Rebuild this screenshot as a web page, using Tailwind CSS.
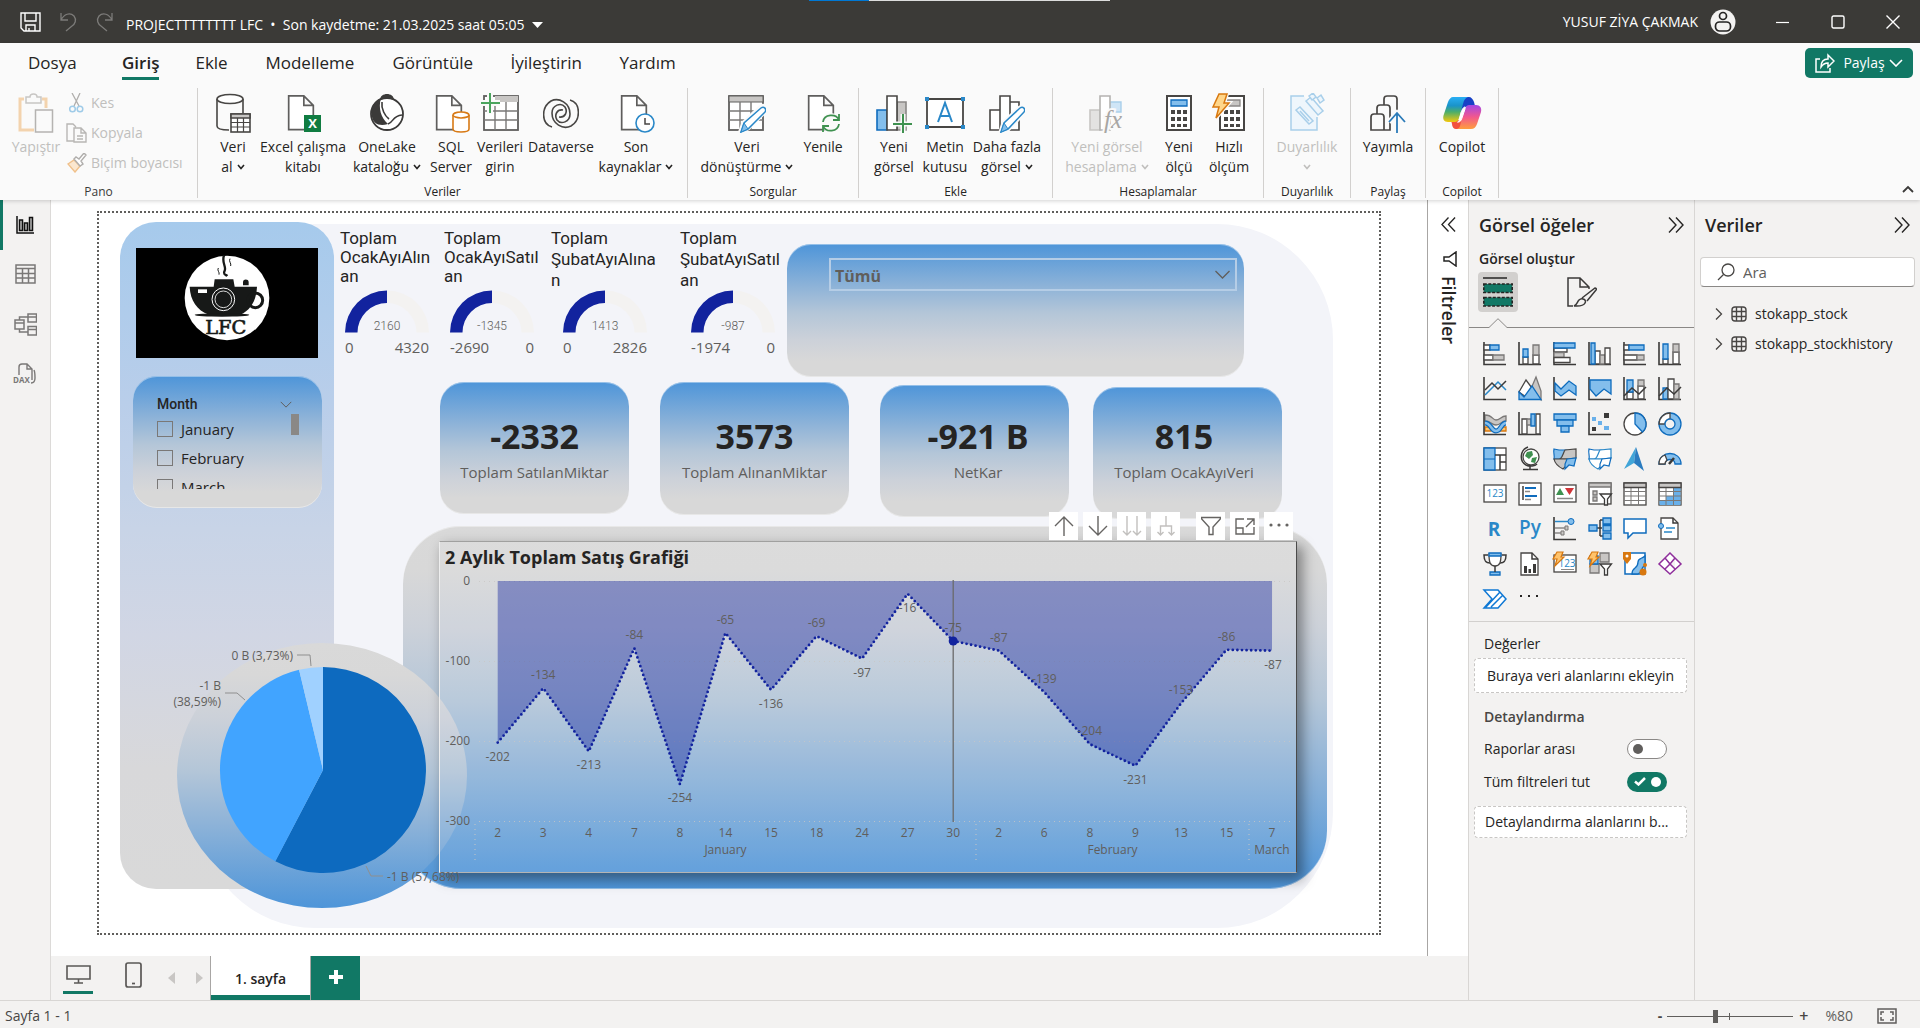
<!DOCTYPE html>
<html lang="tr">
<head>
<meta charset="utf-8">
<title>PROJECTTTTTTTT LFC</title>
<script src="https://cdn.jsdelivr.net/npm/@tailwindcss/browser@4"></script>
</head>
<body class="flex h-screen flex-col overflow-hidden bg-[#f3f2f1] font-['Open_Sans','Noto_Sans',sans-serif] text-[14px] leading-5 text-[#252423]">

<!-- Shared chevron -->
<svg class="hidden">
  <symbol id="chev" viewBox="0 0 8 6"><path d="M1 1l3 3.5L7 1" fill="none" stroke="currentColor" stroke-width="1.6"/></symbol>
  <symbol id="chev-lg" viewBox="0 0 16 9"><path d="M1 1l7 7 7-7" fill="none" stroke="currentColor" stroke-width="1.3"/></symbol>
  <symbol id="dbl-right" viewBox="0 0 16 16"><path d="M1 .5l7 7.5-7 7.500M8 .5L15 8l-7 7.500" fill="none" stroke="currentColor" stroke-width="1.4"/></symbol>
  <symbol id="page" viewBox="0 0 28 38"><path d="M1 1h16l10 10v25.500H1zM17 1v10h10" fill="#fff" stroke="#5f5e5d" stroke-width="1.8"/></symbol>
</svg>

<!-- Title bar -->
<header class="relative flex h-[43px] shrink-0 items-center bg-[#3b3a37] text-white">
  <div class="absolute top-0 left-[809px] flex h-px w-[301px]"><span class="w-[60px] bg-[#0078d4]"></span><span class="flex-1 bg-[#dcdcdc]"></span></div>
  <button class="ml-[20px]" aria-label="Kaydet"><svg class="h-5 w-[21px]" viewBox="0 0 21 20" fill="none" stroke="#fff" stroke-width="1.4"><path d="M1 1h19v18H4l-3-3zM5 1v8h11V1M6 19v-6h9v6M9 19v-3"/></svg></button>
  <button class="ml-[18px]" aria-label="Geri al"><svg class="h-5 w-[18px]" viewBox="0 0 18 20" fill="none" stroke="#7c7b79" stroke-width="1.3"><path d="M2 1v7h7M2 8C5 2 11 0 15 4c3 4 1 8-2 10l-6 5"/></svg></button>
  <button class="ml-[19px]" aria-label="Yinele"><svg class="h-5 w-[18px]" viewBox="0 0 18 20" fill="none" stroke="#7c7b79" stroke-width="1.3"><path d="M16 1v7H9M16 8C13 2 7 0 3 4c-3 4-1 8 2 10l6 5"/></svg></button>
  <button class="ml-[12px] flex items-center gap-2 pt-[6px] text-[14px]"><span>PROJECTTTTTTTT LFC&nbsp; •&nbsp; Son kaydetme: 21.03.2025 saat 05:05</span><svg class="h-[6px] w-[11px]" viewBox="0 0 11 6"><path d="M0 0h11L5.500 6z" fill="#fff"/></svg></button>
  <div class="ml-auto flex items-center">
    <span class="text-[14px]">YUSUF ZİYA ÇAKMAK</span>
    <svg class="ml-3 size-[26px]" viewBox="0 0 26 26"><circle cx="13" cy="13" r="12.500" fill="#f3f2f1"/><g fill="none" stroke="#252423" stroke-width="1.700"><circle cx="13" cy="7" r="3.500"/><rect x="5.500" y="13" width="15" height="9" rx="4"/></g></svg>
    <button class="ml-[40px]" aria-label="Simge durumuna küçült"><svg class="size-[14px]" viewBox="0 0 14 14"><path d="M0 7.500h13" stroke="#fff" stroke-width="1.200"/></svg></button>
    <button class="ml-[41px]" aria-label="Ekranı kapla"><svg class="size-[14px]" viewBox="0 0 14 14"><rect x="1" y="1" width="12" height="12" rx="1.500" fill="none" stroke="#fff" stroke-width="1.400"/></svg></button>
    <button class="mr-[20px] ml-[41px]" aria-label="Kapat"><svg class="size-[14px]" viewBox="0 0 14 14"><path d="M.5.5l13 13M13.500.5l-13 13" stroke="#fff" stroke-width="1.400"/></svg></button>
  </div>
</header>

<!-- Ribbon -->
<section class="z-10 h-[157px] shrink-0 bg-[#fafafa] shadow-[0_1px_4px_#0000002e]">
  <nav class="flex h-[42px] items-start pt-[9px] pl-[28px] text-[17px] leading-[22px]">
    <a href="#" class="w-[94px]">Dosya</a>
    <a href="#" class="mr-[36px] border-b-[3px] border-[#117865] pb-[3px] font-semibold">Giriş</a>
    <a href="#" class="w-[70px]">Ekle</a>
    <a href="#" class="w-[127px]">Modelleme</a>
    <a href="#" class="w-[118px]">Görüntüle</a>
    <a href="#" class="w-[109px]">İyileştirin</a>
    <a href="#">Yardım</a>
    <button class="-mt-1 mr-[7px] ml-auto flex h-[30px] w-[108px] items-center justify-center gap-2 rounded-[5px] bg-[#117865] text-[14px] text-white">
      <svg class="size-5" viewBox="0 0 20 20" fill="none" stroke="#fff" stroke-width="1.500"><path d="M5 6H1v13h14v-4M6 14c0-5 2-8 7-8V2l6 6-6 6v-4c-3 0-5 1-7 4z"/></svg>
      <span class="flex items-center gap-1">Paylaş <svg class="h-2 w-[14px]" viewBox="0 0 14 8"><path d="M1 1l6 6 6-6" fill="none" stroke="#fff" stroke-width="1.600"/></svg></span>
    </button>
  </nav>
  <div class="flex h-[115px] pt-[3px] text-[14px] whitespace-nowrap">
    <div class="flex h-[110px] w-[198px] flex-col justify-between border-r border-[#d2d0ce] text-[#c0bfbd]">
      <div class="flex pt-[5px]">
        <button class="ml-[8px] flex w-[56px] flex-col items-center"><svg class="mb-1 h-10 w-9" viewBox="0 0 36 40" fill="none"><path d="M6 6H2v31h14M24 6h4v9" stroke="#f3d3ae" stroke-width="3"/><path d="M8 4h4c0-4 7-4 7 0h4v6H8z" fill="#fafafa" stroke="#c8c6c4" stroke-width="1.500"/><path d="M17.500 17h17v22h-17z" fill="#fafafa" stroke="#b5b3b1" stroke-width="1.500"/></svg><span>Yapıştır</span></button>
        <div class="flex flex-col">
          <button class="mb-[10px] flex h-[20px] items-center gap-1"><svg class="ml-[2px] h-5 w-[21px]" viewBox="0 0 21 20" fill="none"><path d="M6 0l7 13M14 0L8 13" stroke="#b0aeac" stroke-width="1.300"/><circle cx="6.500" cy="16" r="2.800" stroke="#9fcbe8" stroke-width="1.500"/><circle cx="14" cy="16" r="2.800" stroke="#9fcbe8" stroke-width="1.500"/></svg>Kes</button>
          <button class="mb-[10px] flex h-[20px] items-center gap-1"><svg class="ml-[2px] h-5 w-[21px]" viewBox="0 0 21 20" fill="none" stroke="#b8b6b4" stroke-width="1.400"><path d="M8 18H1V1h6l3 3M8 5h7l5 5v9H8zM15 5v5h5M11 13h6M11 16h6"/></svg>Kopyala</button>
          <button class="flex h-[20px] items-center gap-1"><svg class="ml-[2px] h-5 w-[21px]" viewBox="0 0 21 20" fill="none" stroke-width="1.400"><path d="M2 11l6-4 6 6-5 6z" fill="#fbe7cf" stroke="#f0c08a"/><path d="M8 6l2-2 3 2 5-6 2 2-5 6 2 3-3 2z" fill="#fff" stroke="#b0aeac"/></svg>Biçim boyacısı</button>
        </div>
      </div>
      <div class="text-center text-[12px] leading-[12px] text-[#3b3a39]">Pano</div>
    </div>

    <div class="flex h-[110px] w-[490px] flex-col justify-between border-r border-[#d2d0ce]">
      <div class="flex pt-[5px] pl-[9px]">
        <button class="flex w-[52px] flex-col items-center"><svg class="mb-1 h-10 w-9" viewBox="0 0 36 40" fill="none" stroke="#484644" stroke-width="1.600"><path d="M2 6v27c0 3 6 4 12 4M28 6v14"/><ellipse cx="15" cy="6" rx="13" ry="4.500" fill="#fff"/><rect x="16" y="21" width="19" height="18" fill="#fff"/><path d="M16 21h19v4H16z" fill="#c8c6c4"/><path d="M16 29.500h19M16 34h19M22.500 25v14M28.500 25v14" stroke-width="1.200"/></svg>Veri<span class="flex items-center gap-1">al<svg class="h-[6px] w-2"><use href="#chev"/></svg></span></button>
        <button class="flex w-[88px] flex-col items-center"><span class="relative mb-1 h-10 w-9"><svg class="absolute top-[2px] left-[2px] h-[36px] w-[28px]"><use href="#page"/></svg><span class="absolute top-[22px] left-[19px] h-[17px] w-[17px] bg-[#107c41] text-center text-[13px] leading-[17px] font-bold text-white">X</span></span>Excel çalışma<span>kitabı</span></button>
        <button class="flex w-[80px] flex-col items-center"><svg class="mb-1 h-10 w-9" viewBox="0 0 36 40"><circle cx="18" cy="21" r="16" fill="#fff" stroke="#3b3a39" stroke-width="1.800"/><path d="M12 5c-3 10 0 20 7 26-9 3-15-1-16-7C1 14 6 7 12 5z" fill="#3b3a39"/><path d="M11 7c0-8 14-8 14 0-5-2-9-2-14 0z" fill="#3b3a39"/><path d="M19 31c6-2 4-8 14-9M13 9c-1 7 3 14 7 17" fill="none" stroke="#3b3a39" stroke-width="1.600"/></svg>OneLake<span class="flex items-center gap-1">kataloğu<svg class="h-[6px] w-2"><use href="#chev"/></svg></span></button>
        <button class="flex w-[48px] flex-col items-center"><span class="relative mb-1 h-10 w-9"><svg class="absolute top-[2px] left-[2px] h-[36px] w-[28px]"><use href="#page"/></svg><svg class="absolute top-[18px] left-[19px] h-[22px] w-[18px]" viewBox="0 0 18 22"><path d="M1 4v14c0 4 16 4 16 0V4" fill="#fff" stroke="#d87a16" stroke-width="1.600"/><ellipse cx="9" cy="4" rx="8" ry="3" fill="#fff" stroke="#d87a16" stroke-width="1.600"/></svg></span>SQL<span>Server</span></button>
        <button class="flex w-[50px] flex-col items-center"><svg class="mb-1 h-10 w-[38px]" viewBox="0 0 38 40" fill="none"><rect x="3" y="3" width="34" height="34" fill="#fff" stroke="#5f5e5d" stroke-width="1.800"/><path d="M14 3h23v6H14z" fill="#c8c6c4"/><path d="M3 18h34M3 27h34M14 9v28M25 9v28" stroke="#7a7877" stroke-width="1.400"/><path d="M9-1v22M-1 10h20" stroke="#fafafa" stroke-width="6"/><path d="M9 0v20M0 10h19" stroke="#4ba55e" stroke-width="2"/></svg>Verileri<span>girin</span></button>
        <button class="flex w-[72px] flex-col items-center"><svg class="mb-1 h-10 w-9" viewBox="0 0 36 40" fill="none" stroke="#484644" stroke-width="1.600"><path d="M9 34C-2 31-2 14 8 8c8-4 19 2 19 13 0 8-9 11-13 6-3-5 0-11 6-10M27 7c11 3 11 20 1 26-8 4-19-2-19-13 0-8 9-11 13-6 3 5 0 11-6 10"/></svg>Dataverse</button>
        <button class="flex w-[78px] flex-col items-center"><span class="relative mb-1 h-10 w-9"><svg class="absolute top-[2px] left-[2px] h-[36px] w-[28px]"><use href="#page"/></svg><svg class="absolute top-[20px] left-[17px] size-5" viewBox="0 0 20 20"><circle cx="10" cy="10" r="9" fill="#fff" stroke="#2a88c8" stroke-width="1.600"/><path d="M10 5v6h5" fill="none" stroke="#484644" stroke-width="1.500"/></svg></span>Son<span class="flex items-center gap-1">kaynaklar<svg class="h-[6px] w-2"><use href="#chev"/></svg></span></button>
      </div>
      <div class="text-center text-[12px] leading-[12px]">Veriler</div>
    </div>

    <div class="flex h-[110px] w-[171px] flex-col justify-between border-r border-[#d2d0ce]">
      <div class="flex pt-[5px] pl-[9px]">
        <button class="flex w-[100px] flex-col items-center"><svg class="mb-1 h-10 w-[38px]" viewBox="0 0 38 40" fill="none"><rect x="1" y="3" width="34" height="34" fill="#fff" stroke="#5f5e5d" stroke-width="1.800"/><path d="M1 3h34v6H1z" fill="#c8c6c4" stroke="#5f5e5d"/><path d="M1 18h34M1 27h34M12 9v28M23 9v28" stroke="#7a7877" stroke-width="1.400"/><path d="M13 38l3-8 17-16c3-2 6 1 4 4L20 35z" fill="#fff" stroke="#fafafa" stroke-width="5"/><path d="M13 39l3-9 17-15c3-2 6 1 4 4L20 36z" fill="#fff" stroke="#2a88c8" stroke-width="1.500"/><path d="M13 39l3-9 4 6z" fill="#83beec" stroke="#2a88c8"/></svg>Veri<span class="flex items-center gap-1">dönüştürme<svg class="h-[6px] w-2"><use href="#chev"/></svg></span></button>
        <button class="flex w-[52px] flex-col items-center"><span class="relative mb-1 h-10 w-9"><svg class="absolute top-[2px] left-[2px] h-[36px] w-[28px]"><use href="#page"/></svg><svg class="absolute top-[20px] left-[16px] size-5" viewBox="0 0 20 20"><circle cx="10" cy="10" r="10" fill="#fafafa"/><path d="M2 9c1-8 13-9 16-2M18 1v6h-6M18 11c-1 8-13 9-16 2M2 19v-6h6" fill="none" stroke="#3f9150" stroke-width="1.800"/></svg></span>Yenile</button>
      </div>
      <div class="text-center text-[12px] leading-[12px]">Sorgular</div>
    </div>

    <div class="flex h-[110px] w-[194px] flex-col justify-between border-r border-[#d2d0ce]">
      <div class="flex pt-[5px] pl-[12px]">
        <button class="flex w-[46px] flex-col items-center"><svg class="mb-1 h-10 w-9" viewBox="0 0 36 40"><path d="M21 9h9v28h-9z" fill="#c8c6c4" stroke="#8a8886" stroke-width="1.600"/><path d="M1 17h10v20H1z" fill="#83beec" stroke="#0f6cbd" stroke-width="1.600"/><path d="M11 3h10v34H11z" fill="#fff" stroke="#484644" stroke-width="1.600"/><path d="M27 21v19M17 31h19" stroke="#fafafa" stroke-width="5"/><path d="M27 21v19M17 31h19" stroke="#3f9150" stroke-width="2"/></svg>Yeni<span>görsel</span></button>
        <button class="flex w-[56px] flex-col items-center"><svg class="mb-1 h-10 w-[40px]" viewBox="0 0 40 40"><path d="M2 6h36v28H2z" fill="#fff" stroke="#484644" stroke-width="1.800"/><path d="M0 4h4v4H0zM36 4h4v4h-4zM0 32h4v4H0zM36 32h4v4h-4z" fill="#2a88c8"/><path d="M13 29l7-19 7 19M15 23h10" fill="none" stroke="#2a88c8" stroke-width="2"/></svg>Metin<span>kutusu</span></button>
        <button class="flex w-[68px] flex-col items-center"><svg class="mb-1 h-10 w-9" viewBox="0 0 36 40"><path d="M1 17h10v20H1zM21 9h9v28h-9zM11 3h10v34H11z" fill="#fff" stroke="#484644" stroke-width="1.600"/><path d="M12 39l3-9 16-15c3-2 6 1 4 4L19 36z" fill="#fff" stroke="#fafafa" stroke-width="5"/><path d="M12 39l3-9 16-15c3-2 6 1 4 4L19 36z" fill="#fff" stroke="#2a88c8" stroke-width="1.500"/><path d="M12 39l3-9 4 6z" fill="#83beec" stroke="#2a88c8"/></svg>Daha fazla<span class="flex items-center gap-1">görsel<svg class="h-[6px] w-2"><use href="#chev"/></svg></span></button>
      </div>
      <div class="text-center text-[12px] leading-[12px]">Ekle</div>
    </div>

    <div class="flex h-[110px] w-[211px] flex-col justify-between border-r border-[#d2d0ce]">
      <div class="flex pt-[5px] pl-[8px]">
        <button class="flex w-[92px] flex-col items-center text-[#c0bfbd]"><svg class="mb-1 h-10 w-9" viewBox="0 0 36 40"><path d="M21 9h11v10H21z" fill="#cfe5f6" stroke="#a9cfea" stroke-width="1.400"/><path d="M1 17h10v20H1z" fill="#e3e2e1" stroke="#c8c6c4" stroke-width="1.600"/><path d="M11 3h10v34H11z" fill="#fff" stroke="#b5b3b1" stroke-width="1.600"/><text x="15" y="35" font-family="Liberation Serif" font-style="italic" font-size="25" fill="#a8a6a4" stroke="#fafafa" stroke-width="4" paint-order="stroke">fx</text></svg>Yeni görsel<span class="flex items-center gap-1">hesaplama<svg class="h-[6px] w-2"><use href="#chev"/></svg></span></button>
        <button class="flex w-[52px] flex-col items-center"><svg class="mb-1 h-10 w-9" viewBox="0 0 36 40"><rect x="6" y="3" width="24" height="34" fill="#fff" stroke="#484644" stroke-width="2"/><path d="M10 7h16v6H10z" fill="#83beec" stroke="#0f6cbd" stroke-width="1.300"/><path d="M10 17h4v4h-4zM16 17h4v4h-4zM22 17h4v4h-4zM10 24h4v4h-4zM16 24h4v4h-4zM22 24h4v4h-4zM10 31h4v3h-4zM16 31h4v3h-4zM22 31h4v3h-4z" fill="#484644"/></svg>Yeni<span>ölçü</span></button>
        <button class="flex w-[48px] flex-col items-center"><svg class="mb-1 h-10 w-9" viewBox="0 0 36 40"><rect x="9" y="3" width="24" height="34" fill="#fff" stroke="#484644" stroke-width="2"/><path d="M13 7h16v6H13z" fill="#c8c6c4" stroke="#8a8886" stroke-width="1.300"/><path d="M13 17h4v4h-4zM19 17h4v4h-4zM25 17h4v4h-4zM13 24h4v4h-4zM19 24h4v4h-4zM25 24h4v4h-4zM13 31h4v3h-4zM19 31h4v3h-4zM25 31h4v3h-4z" fill="#484644"/><path d="M8 1h8l-3 9h5L5 25l3-11H2z" fill="#ffd68a" stroke="#fafafa" stroke-width="4"/><path d="M8 1h8l-3 9h5L5 25l3-11H2z" fill="#ffd68a" stroke="#d8780f" stroke-width="1.500"/></svg>Hızlı<span>ölçüm</span></button>
      </div>
      <div class="text-center text-[12px] leading-[12px]">Hesaplamalar</div>
    </div>

    <div class="flex h-[110px] w-[87px] flex-col justify-between border-r border-[#d2d0ce]">
      <button class="flex flex-col items-center pt-[5px] text-[#c0bfbd]"><svg class="mb-1 h-10 w-9" viewBox="0 0 36 40" fill="#eef6fc" stroke="#a9cfea" stroke-width="1.500"><path d="M15 3H2v34h26V24"/><path d="M7 17l4-3 13 14-4 3z"/><path d="M11 18l9 10"/><path d="M17 8l5-4 12 14-5 4z"/><path d="M20 3l4-3 3 4-4 3zM28 5l4-3 3 5-4 3z"/></svg>Duyarlılık<span class="flex h-5 items-center"><svg class="h-[6px] w-2"><use href="#chev"/></svg></span></button>
      <div class="text-center text-[12px] leading-[12px]">Duyarlılık</div>
    </div>
    <div class="flex h-[110px] w-[75px] flex-col justify-between border-r border-[#d2d0ce]">
      <button class="flex flex-col items-center pt-[5px]"><svg class="mb-1 h-10 w-9" viewBox="0 0 36 40" fill="none" stroke="#484644" stroke-width="1.700"><path d="M1 37V24c0-3 2-3 3-3h7c3 0 3 2 3 3v13zM7 21v-6c0-3 2-3 3-3h7c3 0 3 2 3 3v22H14M14 12V6c0-3 2-3 3-3h7c3 0 3 2 3 3v13"/><path d="M27 39V21M19 29l8-9 8 9" stroke="#fafafa" stroke-width="5"/><path d="M27 40V20M19 29l8-9 8 9" stroke="#2a7ab8" stroke-width="1.800"/></svg>Yayımla</button>
      <div class="text-center text-[12px] leading-[12px]">Paylaş</div>
    </div>
    <div class="flex h-[110px] w-[73px] flex-col justify-between border-r border-[#d2d0ce]">
      <button class="flex flex-col items-center pt-[5px]">
        <svg class="mb-1 h-10 w-[40px]" viewBox="0 0 40 40">
          <defs>
            <linearGradient id="cpa" x1="0" y1="0" x2="0" y2="1"><stop offset="0" stop-color="#28aef5"/><stop offset=".35" stop-color="#1a93c9"/><stop offset=".6" stop-color="#4cae6a"/><stop offset="1" stop-color="#f5c80c"/></linearGradient>
            <linearGradient id="cpb" x1="0" y1="0" x2="0" y2="1"><stop offset="0" stop-color="#a347e6"/><stop offset=".5" stop-color="#f2588d"/><stop offset="1" stop-color="#ff9e3d"/></linearGradient>
          </defs>
          <path d="M22 4h5c2 0 4 2 5 5l1 4h-8l-4 8-6-6z" fill="#1741c6"/>
          <path d="M17 36h-3c-2 0-4-2-4-5l-1-4h9l4-7 5 6z" fill="#f2513d"/>
          <path d="M11 4h15c-3 1-4 3-5 7l-4 14c-1 4-3 4-6 4H6c-4 0-6-3-4-8L6 9c1-3 3-5 5-5z" fill="url(#cpa)"/>
          <path d="M29 36H15c3-1 3-3 4-7l4-13c1-4 3-4 6-4h5c4 0 6 3 5 7l-4 12c-1 3-3 5-6 5z" fill="url(#cpb)"/>
          <path d="M23 14c-1 0-2 1-3 3l-3 11c-1 2-2 1-1 1 2 0 3-1 4-4l3-9c0-1 1-2 0-2z" fill="#fff" stroke="#fff"/>
        </svg>Copilot</button>
      <div class="text-center text-[12px] leading-[12px]">Copilot</div>
    </div>
    <button class="mt-auto mr-[6px] mb-[7px] ml-auto" aria-label="Şeridi daralt"><svg class="h-2 w-3" viewBox="0 0 12 8"><path d="M1 7l5-5 5 5" fill="none" stroke="#3b3a39" stroke-width="1.800"/></svg></button>
  </div>
</section>

<main class="flex min-h-0 flex-1">
  <!-- View switcher -->
  <nav class="flex w-[51px] shrink-0 flex-col border-r border-[#dcdad8]">
    <a href="#" class="flex h-[50px] items-center justify-center border-l-[3px] border-[#117865] pr-[3px]" aria-label="Rapor"><svg class="size-[18px]" viewBox="0 0 18 18" fill="none" stroke="#111" stroke-width="1.500"><path d="M1 0v17h17"/><path d="M3.500 4h3v10.500h-3zM8.500 7h3v7.500h-3zM13.500 1.500h3v13h-3z" fill="#bbb"/></svg></a>
    <a href="#" class="flex h-[49px] items-center justify-center pb-[2px]" aria-label="Tablo"><svg class="h-5 w-[21px]" viewBox="0 0 21 20" fill="none" stroke="#7a7877" stroke-width="1.500"><path d="M1 1h19v18H1zM1 4.500h19M1 9.500h19M1 14h19M7.500 4.500V19M13.500 4.500V19"/></svg></a>
    <a href="#" class="flex h-[50px] items-center justify-center" aria-label="Model"><svg class="h-[23px] w-[23px]" viewBox="0 0 23 23" fill="none" stroke="#7a7877" stroke-width="1.500"><path d="M14 1h8.500v8H14zM14 13.500h8.500v8.500H14zM1 7h9v9H1zM1 10h9M14 4h8.500M14 16.500h8.500M5.500 7V4H14M5.500 16v3H14"/></svg></a>
    <a href="#" class="flex h-[50px] items-center justify-center" aria-label="DAX"><svg class="h-[22px] w-[24px] overflow-visible" viewBox="0 0 24 22" fill="none" stroke="#7a7877" stroke-width="1.400"><path d="M6 12V4c0-2 1-3 3-3h5l5 5v11M14 1v5h5M21 7c1 2 1 5 1 8 0 4-2 5-4 5"/><text x="0" y="20" font-size="8" font-weight="700" fill="#7a7877" stroke="none">DAX</text></svg></a>
  </nav>

  <div class="flex min-w-0 flex-1 flex-col">
    <div class="flex min-h-0 flex-1">
      <!-- Report canvas -->
      <div class="min-w-0 flex-1 overflow-hidden bg-white pt-[11px]">
        <div class="relative mx-auto h-[724px] w-[1284px]">
          <div class="absolute inset-0 border-2 border-dotted border-[#605e5c]"></div>
          <div class="absolute top-[13px] left-[102px] h-[704px] w-[1134px] rounded-[116px] bg-[#f3f4f9]"></div>
          <div class="absolute top-[11px] left-[23px] h-[667px] w-[214px] rounded-[36px] bg-[linear-gradient(#a6caec_0%,#b9ceea_27%,#c8d4e7_46%,#d1d6e4_62%,#d8d8da_82%,#d9d9d9_100%)]"></div>

          <!-- Logo -->
          <div class="absolute top-[37px] left-[39px] flex h-[110px] w-[182px] items-start justify-center bg-black pt-[7px]">
            <svg class="size-[86px]" viewBox="551 167 258 258">
              <circle cx="680" cy="296" r="127" fill="#fff"/>
              <path d="M568 262h72l3-22h56l4 22h67c-2 40-18 70-50 84H625c-35-14-55-42-57-84z" fill="#171918"/>
              <path d="M728 258v-10c0-10 17-10 17 0v10z" fill="#171918"/>
              <circle cx="765" cy="303" r="22" fill="none" stroke="#171918" stroke-width="9"/>
              <ellipse cx="665" cy="347" rx="82" ry="5" fill="#171918"/>
              <rect x="593" y="270" width="27" height="11" fill="#fff"/>
              <circle cx="669" cy="300" r="34" fill="#171918" stroke="#fff" stroke-width="3"/>
              <circle cx="669" cy="300" r="25" fill="none" stroke="#fff" stroke-width="2.500"/>
              <path d="M671 168c-8 22 8 34 2 46s4 12 8 16" fill="none" stroke="#171918" stroke-width="7"/>
              <path d="M654 206c-5 8 5 12 2 20M689 178c-5 8 5 14 2 22" fill="none" stroke="#171918" stroke-width="3"/>
              <text x="676" y="405" text-anchor="middle" font-family="DejaVu Serif" font-size="58" fill="#171918" stroke="#171918" stroke-width="2">LFC</text>
            </svg>
          </div>

          <!-- Month slicer -->
          <div class="absolute top-[165px] left-[36px] h-[132px] w-[189px] rounded-[24px] bg-[linear-gradient(#4e95d9_0%,#90b4d8_33%,#b4c6d8_52%,#ccd1d9_72%,#d8d8d8_88%)] shadow-[inset_0_1px_0_#ffffff66,inset_0_-1px_0_#ffffff66]">
            <div class="flex items-center justify-between pt-[18px] pr-[30px] pl-[24px] font-[Roboto,sans-serif] text-[14px] font-medium"><span>Month</span><svg class="h-[7px] w-[12px] text-[#605e5c]"><use href="#chev-lg"/></svg></div>
            <div class="ml-[24px] h-[75px] overflow-hidden text-[15px]">
              <label class="flex h-[29px] items-center gap-2"><input type="checkbox" class="size-4 appearance-none border border-[#7a7877]">January</label>
              <label class="flex h-[29px] items-center gap-2"><input type="checkbox" class="size-4 appearance-none border border-[#7a7877]">February</label>
              <label class="flex h-[29px] items-center gap-2"><input type="checkbox" class="size-4 appearance-none border border-[#7a7877]">March</label>
            </div>
            <div class="absolute top-[38px] right-[23px] h-[21px] w-[8px] bg-[#8a8886]"></div>
          </div>

          <!-- Gauges -->
          <figure class="absolute top-[18px] left-[243px] w-[92px] font-[Roboto,sans-serif] text-[17px] leading-[19px]">
            <figcaption class="whitespace-nowrap">Toplam<br>OcakAyıAlın<br>an</figcaption>
          </figure>
          <figure class="absolute top-[18px] left-[347px] w-[92px] font-[Roboto,sans-serif] text-[17px] leading-[19px]">
            <figcaption class="whitespace-nowrap">Toplam<br>OcakAyıSatıl<br>an</figcaption>
          </figure>
          <figure class="absolute top-[17px] left-[454px] w-[105px] font-[Roboto,sans-serif] text-[17px] leading-[21px]">
            <figcaption class="whitespace-nowrap">Toplam<br>ŞubatAyıAlına<br>n</figcaption>
          </figure>
          <figure class="absolute top-[17px] left-[583px] w-[105px] font-[Roboto,sans-serif] text-[17px] leading-[21px]">
            <figcaption class="whitespace-nowrap">Toplam<br>ŞubatAyıSatıl<br>an</figcaption>
          </figure>
          <svg class="absolute top-[79px] left-[240px] h-[70px] w-[450px]" viewBox="0 0 450 70" id="gauges"></svg>

          <!-- Drop-down slicer -->
          <div class="absolute top-[33px] left-[690px] h-[133px] w-[457px] rounded-[24px] bg-[linear-gradient(#4e95d9_0%,#90b4d8_33%,#b4c6d8_52%,#ccd1d9_72%,#d8d8d8_88%)] pt-[14px] pr-[7px] pl-[42px] shadow-[inset_0_1px_0_#ffffff66,inset_0_-1px_0_#ffffff66]">
            <div class="relative">
              <select aria-label="Filtre" class="block h-[33px] w-full appearance-none border-2 border-[#b5cde6] bg-transparent pt-[2px] pl-[4px] text-[16px] font-bold text-[#605e5c]"><option>Tümü</option></select>
              <svg class="pointer-events-none absolute top-[12px] right-[6px] h-[9px] w-[17px] text-[#605e5c]"><use href="#chev-lg"/></svg>
            </div>
          </div>

          <!-- Cards -->
          <div class="absolute top-[171px] left-[343px] h-[132px] w-[189px] rounded-[24px] bg-[linear-gradient(#4e95d9_0%,#90b4d8_33%,#b4c6d8_52%,#ccd1d9_72%,#d8d8d8_88%)] pt-[34px] text-center shadow-[inset_0_1px_0_#ffffff66,inset_0_-1px_0_#ffffff66]"><p class="text-[34px] leading-10 font-bold">-2332</p><p class="mt-[6px] text-[15px] text-[#605e5c]">Toplam SatılanMiktar</p></div>
          <div class="absolute top-[171px] left-[563px] h-[133px] w-[189px] rounded-[24px] bg-[linear-gradient(#4e95d9_0%,#90b4d8_33%,#b4c6d8_52%,#ccd1d9_72%,#d8d8d8_88%)] pt-[34px] text-center shadow-[inset_0_1px_0_#ffffff66,inset_0_-1px_0_#ffffff66]"><p class="text-[34px] leading-10 font-bold">3573</p><p class="mt-[6px] text-[15px] text-[#605e5c]">Toplam AlınanMiktar</p></div>
          <div class="absolute top-[174px] left-[783px] h-[132px] w-[189px] rounded-[24px] bg-[linear-gradient(#4e95d9_0%,#90b4d8_33%,#b4c6d8_52%,#ccd1d9_72%,#d8d8d8_88%)] pt-[31px] pl-[7px] text-center shadow-[inset_0_1px_0_#ffffff66,inset_0_-1px_0_#ffffff66]"><p class="text-[34px] leading-10 font-bold">-921 B</p><p class="mt-[6px] text-[15px] text-[#605e5c]">NetKar</p></div>
          <div class="absolute top-[176px] left-[996px] h-[132px] w-[189px] rounded-[24px] bg-[linear-gradient(#4e95d9_0%,#90b4d8_33%,#b4c6d8_52%,#ccd1d9_72%,#d8d8d8_88%)] pt-[29px] pr-[7px] text-center shadow-[inset_0_1px_0_#ffffff66,inset_0_-1px_0_#ffffff66]"><p class="text-[34px] leading-10 font-bold">815</p><p class="mt-[6px] text-[15px] text-[#605e5c]">Toplam OcakAyıVeri</p></div>

          <!-- Area chart backdrop and pie -->
          <div class="absolute top-[315px] left-[306px] h-[363px] w-[924px] rounded-[58px] bg-[linear-gradient(#d9d9d9_0%,#d8d8d8_12%,#ccd1d9_28%,#b4c6d8_48%,#90b4d8_67%,#4e95d9_100%)] shadow-[inset_0_1px_0_#ffffff66,inset_0_-1px_0_#ffffff66]"></div>
          <div class="absolute top-[432px] left-[80px] h-[265px] w-[290px] rounded-[50%] bg-[linear-gradient(#d9d9d9_0%,#d8d8d8_12%,#ccd1d9_28%,#b4c6d8_48%,#90b4d8_67%,#4e95d9_100%)]"></div>

          <!-- Area chart -->
          <div class="absolute top-[330px] left-[342px] h-[332px] w-[858px] border border-t-[#a0a09f] border-r-[#4a4a4a] border-b-[#b4b4b4] border-l-[#eeeeee] bg-white/8 shadow-[5px_6px_12px_1px_#00000066]">
            <h2 class="pt-[4px] pl-[5px] text-[18px] leading-[22px] font-bold">2 Aylık Toplam Satış Grafiği</h2>
            <svg id="area" class="absolute -top-px -left-px h-[332px] w-[858px]" viewBox="-1 0 858 332"></svg>
          </div>
          <svg class="absolute top-[430px] left-[60px] h-[270px] w-[330px]" viewBox="157 641 330 270" font-size="12" fill="#605e5c">
            <path d="M323 770V667A103 103 0 1 1 275.300 861.300z" fill="#0d6abf"/>
            <path d="M323 770L275.300 861.300A103 103 0 0 1 299.100 669.800z" fill="#41a4ff"/>
            <path d="M323 770L299.100 669.800A103 103 0 0 1 323 667z" fill="#a0d1ff"/>
            <path d="M297 655h13l1 11M225 693h12l8 7M366 866l5 10h12" fill="none" stroke="#8f8f8f"/>
            <text x="293" y="660" text-anchor="end">0 B (3,73%)</text>
            <text x="221" y="690" text-anchor="end">-1 B</text>
            <text x="221" y="706" text-anchor="end">(38,59%)</text>
            <text x="387" y="881">-1 B (57,68%)</text>
          </svg>

          <!-- Visual header -->
          <div class="absolute top-[301px] left-[952px] flex h-[28px] gap-[5px] text-[#666462] *:flex *:h-[28px] *:w-[29px] *:items-center *:justify-center *:bg-white">
            <button aria-label="Detaya git yukarı"><svg class="size-5" viewBox="0 0 20 20" fill="none" stroke="currentColor" stroke-width="1.400"><path d="M10 20V1M1 10l9-9 9 9"/></svg></button>
            <button aria-label="Detaya git"><svg class="size-5" viewBox="0 0 20 20" fill="none" stroke="currentColor" stroke-width="1.400"><path d="M10 0v19M1 10l9 9 9-9"/></svg></button>
            <button aria-label="Sonraki düzey"><svg class="size-5" viewBox="0 0 20 20" fill="none" stroke="#c2c0be" stroke-width="1.400"><path d="M5 0v19M1 15l4 4 4-4M15 0v19M11 15l4 4 4-4"/></svg></button>
            <button aria-label="Genişlet"><svg class="size-5" viewBox="0 0 20 20" fill="none" stroke="#c2c0be" stroke-width="1.400"><path d="M10 0v10M4.500 19v-9h11v9M1.500 16l3 3 3-3M12.500 16l3 3 3-3"/></svg></button>
            <button class="ml-[11px]" aria-label="Filtreler"><svg class="size-5" viewBox="0 0 20 20" fill="none" stroke="currentColor" stroke-width="1.400"><path d="M.7 1.500h18.600v1.500L12 11v7.500H8V11L.7 3z"/></svg></button>
            <button aria-label="Odak modu"><svg class="size-5" viewBox="0 0 20 20" fill="none" stroke="currentColor" stroke-width="1.400"><path d="M9 3H1v15h18v-7M12 3h7v6M19 3l-8 8M1 12h7v6"/></svg></button>
            <button aria-label="Diğer seçenekler"><svg class="size-5" viewBox="0 0 20 20" fill="currentColor"><circle cx="2" cy="9" r="1.600"/><circle cx="10" cy="9" r="1.600"/><circle cx="18" cy="9" r="1.600"/></svg></button>
          </div>
        </div>
      </div>
      <!-- Collapsed filter pane -->
      <aside class="flex w-[41px] shrink-0 flex-col items-center border-l border-[#a8a6a4] bg-white pt-[17px]">
        <button aria-label="Genişlet"><svg class="size-[15px] rotate-180"><use href="#dbl-right"/></svg></button>
        <svg class="mt-[19px] ml-[4px] h-4 w-[14px]" viewBox="0 0 14 16" fill="none" stroke="#252423" stroke-width="1.500"><path d="M13 1v14L6 10H1V6h5z"/></svg>
        <h2 class="mt-[9px] ml-[2px] text-[18px] leading-6 font-semibold [writing-mode:vertical-rl]">Filtreler</h2>
      </aside>
    </div>
    <!-- Page tabs -->
    <div class="flex h-[44px] shrink-0">
      <button class="mb-[6px] ml-[12px] flex w-[30px] flex-col items-center border-b-[3px] border-[#117865] pt-[9px]" aria-label="Masaüstü"><svg class="h-[19px] w-[25px]" viewBox="0 0 25 19" fill="none" stroke="#5a5856" stroke-width="1.600"><path d="M1 1h23v13H1zM12.500 14v4M8 18h9"/></svg></button>
      <button class="ml-[32px]" aria-label="Mobil"><svg class="mb-[6px] h-[26px] w-[17px]" viewBox="0 0 17 26" fill="none" stroke="#5a5856" stroke-width="1.700"><rect x="1" y="1" width="15" height="24" rx="2"/><path d="M7 21.500h3"/></svg></button>
      <button class="ml-[26px]" aria-label="Önceki"><svg class="h-[12px] w-[7px]" viewBox="0 0 7 12"><path d="M7 0v12L0 6z" fill="#c8c6c4"/></svg></button>
      <button class="ml-[21px]" aria-label="Sonraki"><svg class="h-[12px] w-[7px]" viewBox="0 0 7 12"><path d="M0 0v12l7-6z" fill="#c8c6c4"/></svg></button>
      <button class="ml-[7px] w-[101px] border-x border-x-[#a8a6a4] bg-white pt-[2px] text-[14px] font-semibold shadow-[inset_0_-5px_0_#117865]">1. sayfa</button>
      <button class="flex w-[49px] items-center justify-center bg-[#117865]" aria-label="Yeni sayfa"><svg class="mb-[3px] size-[14px]" viewBox="0 0 14 14"><path d="M7 0v14M0 7h14" stroke="#fff" stroke-width="4"/></svg></button>
    </div>
  </div>

  <!-- Visualizations pane -->
  <aside class="flex w-[227px] shrink-0 flex-col border-x border-[#d8d6d4]">
    <div class="flex h-[50px] items-center justify-between pr-[10px] pl-[10px]"><h2 class="text-[18px] font-semibold">Görsel öğeler</h2><button aria-label="Daralt"><svg class="size-4"><use href="#dbl-right"/></svg></button></div>
    <h3 class="pl-[10px] text-[14px] leading-[18px] font-semibold">Görsel oluştur</h3>
    <div class="mt-1 flex gap-[44px] pl-[9px]">
      <button class="flex size-10 items-center justify-center rounded bg-[#d2d0ce]" aria-label="Görsel oluştur"><svg class="size-[30px]" viewBox="0 0 30 30"><path d="M0 1h24" stroke="#252423" stroke-width="1.500"/><path d="M.8 7h28.400v8.500H.8zM.8 20.500h28.400V29H.8z" fill="#117865" stroke="#252423" stroke-width="1.600" stroke-dasharray="3 1.500"/></svg></button>
      <button class="flex size-10 items-center justify-center" aria-label="Görseli biçimlendir"><svg class="size-[30px]" viewBox="0 0 30 30" fill="none" stroke="#3b3a39" stroke-width="1.500"><path d="M6 29H1V1h12l9 9v2M13 1v9h9M12 23c3-3 8 0 6 3-2 4-8 3-11 3 3-1 3-4 5-6zM15 21L28 11c1 0 2 1 1 2l-9 11"/></svg></button>
    </div>
    <div class="mt-[6px] flex h-[10px] items-end"><span class="w-[19px] border-b border-[#8a8886]"></span><svg class="h-[10px] w-5" viewBox="0 0 20 10"><path d="M0 9.500h1L10 .7l9 8.800h1" fill="none" stroke="#8a8886"/></svg><span class="flex-1 border-b border-[#8a8886]"></span></div>
    <div id="visuals" class="grid auto-rows-[35px] grid-cols-[repeat(6,35px)] pt-2 pl-[8px]"></div>
    <div class="mt-[5px] border-t border-[#d2d0ce] pt-3 pr-[7px] pl-[5px]">
      <h3 class="pl-[10px]">Değerler</h3>
      <div class="mt-[4px] flex h-[35px] items-center rounded-sm border border-dashed border-[#c8c6c4] bg-white pl-[12px] whitespace-nowrap">Buraya veri alanlarını ekleyin</div>
      <h3 class="mt-[14px] pl-[10px] font-semibold text-[#484644]">Detaylandırma</h3>
      <label class="mt-[5px] flex h-[33px] items-center justify-between pr-[20px] pl-[10px]">Raporlar arası
        <input type="checkbox" class="h-5 w-10 appearance-none rounded-full border border-[#8a8886] bg-white before:mt-[4px] before:ml-[5px] before:block before:size-[10px] before:rounded-full before:bg-[#605e5c]"></label>
      <label class="relative flex h-[33px] items-center justify-between pr-[20px] pl-[10px]">Tüm filtreleri tut
        <input type="checkbox" checked class="h-5 w-10 appearance-none rounded-full bg-[#117865] before:mt-[5px] before:ml-6 before:block before:size-[10px] before:rounded-full before:bg-white">
        <svg class="absolute right-[41px] h-[9px] w-[12px]" viewBox="0 0 12 9"><path d="M1 4.500L4.500 7.500 11 1" fill="none" stroke="#fff" stroke-width="2.500"/></svg></label>
      <div class="mt-[8px] flex h-8 items-center rounded-sm border border-dashed border-[#c8c6c4] bg-white pl-[10px] whitespace-nowrap">Detaylandırma alanlarını b...</div>
    </div>
  </aside>

  <!-- Data pane -->
  <aside class="flex w-[225px] shrink-0 flex-col">
    <div class="flex h-[50px] items-center justify-between pr-[10px] pl-[10px]"><h2 class="text-[18px] font-semibold">Veriler</h2><button aria-label="Daralt"><svg class="size-4"><use href="#dbl-right"/></svg></button></div>
    <label class="mx-[5px] mt-[7px] flex h-[30px] items-center gap-2 rounded border border-[#d2d0ce] border-b-[#8a8886] bg-white pl-4"><svg class="size-[18px] shrink-0" viewBox="0 0 18 18" fill="none" stroke="#484644" stroke-width="1.300"><circle cx="11" cy="7" r="6"/><path d="M6.500 11.500L1 17"/></svg><input type="text" placeholder="Ara" aria-label="Ara" class="w-full bg-transparent text-[15px] outline-none placeholder:text-[#605e5c]"></label>
    <ul class="mt-3 pl-[20px] whitespace-nowrap">
      <li class="flex h-[30px] items-center gap-2"><svg class="h-[12px] w-[8px]" viewBox="0 0 8 12" fill="none" stroke="#484644" stroke-width="1.300"><path d="M1 .5L6.500 6 1 11.500"/></svg><svg class="size-4" viewBox="0 0 16 16" fill="none" stroke="#484644" stroke-width="1.400"><rect x="1" y="1" width="14" height="14" rx="3"/><path d="M1 5.500h14M1 10.500h14M5.500 1v14M10.500 1v14"/></svg>stokapp_stock</li>
      <li class="flex h-[30px] items-center gap-2"><svg class="h-[12px] w-[8px]" viewBox="0 0 8 12" fill="none" stroke="#484644" stroke-width="1.300"><path d="M1 .5L6.500 6 1 11.500"/></svg><svg class="size-4" viewBox="0 0 16 16" fill="none" stroke="#484644" stroke-width="1.400"><rect x="1" y="1" width="14" height="14" rx="3"/><path d="M1 5.500h14M1 10.500h14M5.500 1v14M10.500 1v14"/></svg>stokapp_stockhistory</li>
    </ul>
  </aside>
</main>

<!-- Status bar -->
<footer class="flex h-[28px] shrink-0 items-center border-t border-[#d8d6d4] pt-[3px] text-[14px] text-[#484644]">
  <span class="pl-[5px]">Sayfa 1 - 1</span>
  <div class="ml-auto flex items-center">
    <button class="mr-[5px] font-bold" aria-label="Uzaklaştır">-</button>
    <div class="relative flex items-center">
      <input type="range" min="0" max="100" value="38" aria-label="Yakınlaştırma" class="h-[14px] w-[126px] appearance-none bg-[linear-gradient(#605e5c,#605e5c)] bg-[length:100%_1px] bg-center bg-no-repeat [&::-webkit-slider-thumb]:h-[13px] [&::-webkit-slider-thumb]:w-[5px] [&::-webkit-slider-thumb]:appearance-none [&::-webkit-slider-thumb]:bg-[#605e5c]">
      <span class="absolute top-[4px] left-[62px] h-[7px] w-px bg-[#605e5c]"></span>
    </div>
    <button class="ml-[6px] text-[16px] font-semibold" aria-label="Yakınlaştır">+</button>
    <span class="ml-[17px] text-[#605e5c]">%80</span>
    <button class="mr-[23px] ml-[24px]" aria-label="Sayfaya sığdır"><svg class="h-4 w-5" viewBox="0 0 20 16" fill="none" stroke="#605e5c" stroke-width="1.500"><path d="M1 1h18v14H1zM4 7V4h3M4 9v3h3M16 7V4h-3M16 9v3h-3"/></svg></button>
  </div>
</footer>

<script>
// Gauges: arc centre, value, minimum, maximum
document.getElementById('gauges').innerHTML = [
  [50, '2160', '0', '4320'], [155, '-1345', '-2690', '0'], [268, '1413', '0', '2826'], [396, '-987', '-1974', '0']
].map(([c, v, lo, hi]) => `
  <path d="M${c - 42} 42.500a42 42 0 0 1 42-42v12.500a29.500 29.500 0 0 0-29.500 29.500z" fill="#12239e"/>
  <path d="M${c + 42} 42.500a42 42 0 0 0-42-42v12.500a29.500 29.500 0 0 1 29.500 29.500z" fill="#f3f2f1"/>
  <text x="${c}" y="40" text-anchor="middle" font-family="Roboto" font-weight="300" font-size="12" fill="#605e5c">${v}</text>
  <text x="${c - 42}" y="63" font-size="15" fill="#605e5c">${lo}</text>
  <text x="${c + 42}" y="63" text-anchor="end" font-size="15" fill="#605e5c">${hi}</text>`).join('');

// Area chart
const days = [2, 3, 4, 7, 8, 14, 15, 18, 24, 27, 30, 2, 6, 8, 9, 13, 15, 7];
const vals = [202, 134, 213, 84, 254, 65, 136, 69, 97, 16, 75, 87, 139, 204, 231, 153, 86, 87];
const below = [0, 2, 4, 6, 8, 9, 14, 17];
const px = i => 57.7 + i * 45.55, py = v => 40 + v * 0.8;
const line = vals.map((v, i) => px(i).toFixed(1) + ' ' + py(v).toFixed(1)).join('L');
let s = [0, 100, 200, 300].map(v => `<path d="M39 ${py(v) + .5}H850" stroke="#c8c6c4" stroke-opacity=".8" stroke-dasharray="1 4"/>
  <text x="30" y="${py(v) + 4}" text-anchor="end">${v ? '-' + v : 0}</text>`).join('');
s += `<path d="M${px(0)} 40L${line}L${px(17)} 40z" fill="#12239e" fill-opacity=".42"/>
  <path d="M${line}" fill="none" stroke="#12239e" stroke-width="2.800" stroke-linecap="round" stroke-dasharray="0 4.600"/>
  <path d="M513.200 39V281" stroke="#6b6b6b" stroke-width="1.300"/><circle cx="513.200" cy="${py(75)}" r="4.500" fill="#12239e"/>
  <path d="M35 283v37M536 283v37M809 283v37" stroke="#c8c6c4" stroke-dasharray="1 4"/>`;
s += days.map((d, i) => `<text x="${px(i)}" y="296" text-anchor="middle">${d}</text>
  <text x="${px(i) + (i === 17 ? 1 : 0)}" y="${py(vals[i]) + (below.includes(i) ? 18 : -9)}" text-anchor="middle">-${vals[i]}</text>`).join('');
s += '<text x="285.500" y="313" text-anchor="middle">January</text><text x="672.500" y="313" text-anchor="middle">February</text><text x="832" y="313" text-anchor="middle">March</text>';
const area = document.getElementById('area');
area.setAttribute('font-size', '12'); area.setAttribute('fill', '#605e5c');
area.innerHTML = s;

// Visual gallery
const ax = '<path d="M1 0v22.500h22" fill="none" stroke="#3b3a39" stroke-width="1.600"/>';
const B = 'fill="#83beec" stroke="#0f6cbd" stroke-width="1.300"', G = 'fill="#c8c6c4" stroke="#7a7877" stroke-width="1.300"',
      W = 'fill="#fff" stroke="#484644" stroke-width="1.300"', N = 'fill="none" stroke="#3b3a39" stroke-width="1.500"';
const bolt = '<path d="M4 0h6L8 5h3L2 14l2-7H0z" fill="#ffc36b" stroke="#d8780f" stroke-width="1.200"/>';
const funnel = '<path d="M12 12h11.500l-4 5v6h-3v-6z" fill="#fff" stroke="#3b3a39" stroke-width="1.300"/>';
const frame = `<rect x="1" y="3" width="22" height="17" ${W}/>`;
const grid = '<path d="M1 9.500h22M1 14h22M1 18.500h22M8 6v17M15.500 6v17" stroke="#7a7877" fill="none"/>';
const map = (a, b) => `<path d="M1 2l5 1 8 0v8l-6 1H1c1-3-1-6 0-10z" fill="${a}" stroke="#0f6cbd" stroke-width="1.200"/><path d="M12 3l11-1v9l-9 1H7c3-2 3-6 5-9z" fill="${b}" stroke="#484644" stroke-width="1.200"/><path d="M1 12h13v6l-4 4c-4-2-8-5-9-10z" fill="${b}" stroke="#484644" stroke-width="1.200"/><path d="M14 12l9-1-2 8-5-1-4 4v-5z" fill="${a}" stroke="#0f6cbd" stroke-width="1.200"/>`;
const icons = {
  'Yığılmış çubuk': ax + `<path d="M1 3h6v5H1z" ${W}/><path d="M7 3h9v5H7z" ${B}/><path d="M1 13h9v5H1z" ${W}/><path d="M10 13h11v5H10z" ${G}/>`,
  'Yığılmış sütun': ax + `<path d="M5 15h5v7H5zM15 13h6v9h-6z" ${W}/><path d="M5 7h5v8H5z" ${B}/><path d="M15 3h6v10h-6z" ${G}/>`,
  'Kümelenmiş çubuk': ax + `<path d="M1 6h13v4H1z" ${W}/><path d="M1 10.500h10v5H1z" ${G}/><path d="M1 15.500h16v5H1z" ${W}/><path d="M1 1h21v5H1z" ${B}/>`,
  'Kümelenmiş sütun': ax + `<path d="M7 9h5v13H7z" ${W}/><path d="M12 13h5v9h-5z" ${G}/><path d="M17 6h5v16h-5z" ${W}/><path d="M3 1h4v21H3z" ${B}/>`,
  '%100 çubuk': ax + `<path d="M1 3h5v5H1z" ${W}/><path d="M6 3h15v5H6z" ${B}/><path d="M1 13h13v5H1z" ${W}/><path d="M14 13h7v5h-7z" ${G}/>`,
  '%100 sütun': ax + `<path d="M5 17h5v5H5zM15 10h6v12h-6z" ${W}/><path d="M5 2h5v15H5z" ${B}/><path d="M15 2h6v8h-6z" ${G}/>`,
  'Çizgi': ax + `<path d="M2 18L15 5l8 8" fill="none" stroke="#2a88c8" stroke-width="1.500"/><path d="M2 13l7-7 6 6 8-8" ${N}/>`,
  'Alan': `<path d="M12 14L18 0l5 14v9z" ${G}/><path d="M1 15L8 3l9 12-9 5z" ${W}/><path d="M1 15l5 5 8-11 9 13.500H1z" ${B}/>`,
  'Yığılmış alan': ax + `<path d="M2 6l6 6 8-8 7 5v9l-7-5-8 6-6-5z" ${B}/>`,
  '%100 alan': ax + `<path d="M2 3h21v14l-7-5-8 7-6-7z" ${B}/>`,
  'Çizgi ve yığılmış': ax + `<path d="M4 15h6v7H4zM15 9h6v13h-6z" ${W}/><path d="M4 3h6v12H4z" ${B}/><path d="M15 3h6v6h-6z" ${G}/><path d="M1 19l8-8 7 6 7-7" ${N}/>`,
  'Çizgi ve kümelenmiş': ax + `<path d="M5 11h5v11H5z" ${B}/><path d="M10 2h6v20h-6z" ${W}/><path d="M16 7h5v15h-5z" ${G}/><path d="M1 19l8-8 7 6 7-7" ${N}/>`,
  'Şerit': `<path d="M2 3c8 0 7 5 11 5s5-4 10-4v5c-5 0-5 4-10 4S8 9 2 9z" ${G}/><path d="M2 15h6v4H2zM17 15h6v4h-6z" fill="#ffc36b" stroke="#d8780f" stroke-width="1.300"/><path d="M2 11c6 0 6 8 11 8s5-8 10-8" fill="none" stroke="#0f6cbd" stroke-width="5"/><path d="M2 11c6 0 6 8 11 8s5-8 10-8" fill="none" stroke="#83beec" stroke-width="2.500"/>` + ax,
  'Şelale': ax + `<path d="M4 7h5v15H4zM18 2h4v20h-4z" ${W}/><path d="M9 7h4v6H9z" ${G}/><path d="M13 2h4v12h-4z" ${B}/>`,
  'Huni': `<path d="M1 2h22v6H1z" ${B}/><path d="M4 8h16v6H4z" ${B}/><path d="M8 14h8v6H8z" ${B}/>`,
  'Dağılım': ax + '<path d="M16 1h5v5h-5zM4 15h4v4H4z" fill="#3b3a39"/><path d="M4 5h4v4H4zM10 9h4v4h-4zM16 14h5v4h-5z" fill="#69b0ea"/>',
  'Pasta': `<circle cx="12" cy="12" r="11" ${W}/><path d="M12 1a11 11 0 0 1 7.500 19L12 12z" ${B}/>`,
  'Halka': `<circle cx="12" cy="12" r="11" ${B}/><path d="M12 1v6a5 5 0 0 0-5 5H1C1 6 6 1 12 1z" ${W}/><circle cx="12" cy="12" r="5" fill="#f3f2f1" stroke="#0f6cbd" stroke-width="1.300"/>`,
  'Ağaç haritası': `<rect x="1" y="1" width="22" height="22" ${W}/><path d="M1 1h11v22H1z" ${B}/><path d="M12 8h11M17 8v15M17 15h6" ${N}/><path d="M1 12h11" stroke="#0f6cbd"/>`,
  'Harita': `<circle cx="13" cy="10" r="8" ${W}/><path d="M9 5l5-1 1 4-4 4-4-3zM14 11l5-1-2 6-4-1z" fill="#3f9150"/><path d="M10 0C2 3 1 14 8 18c4 2 9 1 11-1M12 18v4M5 22.500h15" ${N}/>`,
  'Kartogram': map('#83beec', '#c8c6c4'),
  'Şekil haritası': map('#fff', '#fff').replaceAll('#484644', '#2a88c8'),
  'Azure haritası': '<path d="M13 0L1 22l10-6z" fill="#41a5d8"/><path d="M13 0l8 24-10-8z" fill="#2b7cc0"/>',
  'Ölçer': `<path d="M1 17c0-14 22-14 22 0h-6c0-6-10-6-10 0z" ${B}/><path d="M1 17c0-5 3-8 6-9l2 5c-1 1-2 2-2 4z" ${W}/><path d="M11 17l5-6" stroke="#3b3a39" stroke-width="2.500"/>`,
  'Kart': frame + '<text x="12" y="15" text-anchor="middle" font-size="10" fill="#2a88c8">123</text>',
  'Çok satırlı kart': `<rect x="1" y="1" width="22" height="22" ${W}/><path d="M5 4v14" ${N}/><path d="M7 6h11M7 14h12" stroke="#0f6cbd" stroke-width="2"/><path d="M7 9.500h5M7 17.500h6" stroke="#8a8886" stroke-width="1.500"/>`,
  'KPI': frame + '<path d="M3 13l4-7 4 7z" fill="#3f9150"/><path d="M12 6h9l-4.500 7z" fill="#d13438"/><path d="M4 16.500h16" stroke="#8a8886" stroke-width="1.500"/>',
  'Dilimleyici': `<rect x="1" y="1" width="22" height="21" ${W}/><path d="M1 1h22v4H1z" ${G}/><path d="M5 9h4v4H5zM5 15h4v4H5z" ${G}/>` + funnel,
  'Tablo': `<rect x="1" y="1" width="22" height="22" ${W}/>${grid}<path d="M1 1h22v4.500H1z" fill="#c8c6c4" stroke="#484644" stroke-width="1.300"/>`,
  'Matris': `<rect x="1" y="1" width="22" height="22" ${W}/><path d="M15.500 5h7v18h-21v-5H8v-4h7.500z" fill="#69b0ea"/>${grid}<path d="M1 1h22v4.500H1z" fill="#c8c6c4" stroke="#484644" stroke-width="1.300"/>`,
  'R betiği': '<text x="11" y="18.500" text-anchor="middle" font-size="19" font-weight="700" fill="#2a88c8">R</text>',
  'Python': '<text x="12" y="17" text-anchor="middle" font-size="19" font-weight="600" fill="#2a88c8">Py</text>',
  'Etkileyenler': ax + '<path d="M2 4.500h14" stroke="#2a88c8" stroke-width="1.500"/><circle cx="18" cy="4.500" r="3" fill="#83beec" stroke="#0f6cbd"/><path d="M2 11h10M2 16h6" stroke="#8a8886" stroke-width="1.500"/><path d="M12 9h3v4h-3zM8 14h3v4H8z" fill="#c8c6c4" stroke="#7a7877"/>',
  'Ayrıştırma ağacı': `<path d="M9 11h5M12 3v16M12 3h3M12 19h3" ${N}/><path d="M1 8h8v6H1zM15 1h8v6h-8zM15 8.500h8v5.500h-8zM15 16h8v6h-8z" ${B}/>`,
  'Soru-Cevap': '<path d="M1 2h22v14H10l-5 5v-5H1z" fill="#fff" stroke="#0f6cbd" stroke-width="1.500"/>',
  'Anlatı': `<path d="M3 1h12l5 5v16H3z" ${W}/><path d="M15 1v5h5" ${N}/><path d="M8 11h9M6 15h8" stroke="#2a88c8" stroke-width="1.300"/><circle cx="3" cy="9" r="2.500" fill="#83beec" stroke="#0f6cbd"/>`,
  'Hedefler': `<path d="M5 3H1c0 5 1 8 6 8M19 3h4c0 5-1 8-6 8" ${N}/><path d="M6 2h12c0 8-1 12-6 12S6 10 6 2z" ${W}/><path d="M6 1h12v3H6zM7 20h10v3H7z" ${B}/><path d="M12 14v6" ${N}/>`,
  'Sayfalandırılmış rapor': `<path d="M3 1h11l6 6v16H3z" ${W}/><path d="M14 1v6h6" ${N}/><path d="M6 14h3v7H6zM10.500 17h2.500v4h-2.500zM15 12h3v9h-3z" fill="#3b3a39"/>`,
  'Kart (yeni)': frame + '<text x="14" y="15" text-anchor="middle" font-size="10" fill="#2a88c8">123</text><path d="M8 17.500h13" stroke="#8a8886"/>' + bolt,
  'Dilimleyici (yeni)': `<path d="M12 1h9v9h-9zM2 12h9v9H2z" ${G}/><path d="M2 4h8v8H2z" ${B}/>` + bolt + funnel,
  'ArcGIS': `<path d="M2 1h20v21H2z" fill="#fff" stroke="#0f6cbd" stroke-width="1.500"/><path d="M9 22c0-8 6-4 6-12 0-4 4-3 7-6v10c-4 0-2 6-7 8z" ${B}/><path d="M0 0h8v7l-4 5-4-5z" fill="#d8780f"/><circle cx="4" cy="4" r="1.500" fill="#fff"/><circle cx="20" cy="20" r="3.500" fill="#d8780f"/><circle cx="22" cy="13" r="2" fill="#d8780f"/>`,
  'Power Apps': '<path d="M12 1l11 11-11 10L1 12zM7 6l5 6-5 5M17 6l-5 6 5 5M12 1l5 5M7 6l5-5" fill="#fff" stroke="#8f2f9c" stroke-width="1.500"/>',
  'Power Automate': '<path d="M1 3h14l8 9-8 9H1l8-9zM3 20L17 5M8 20l12-12" fill="#fff" stroke="#0f78d4" stroke-width="1.500"/>',
  'Daha fazla': '<path d="M2 8h2v2H2zM10 8h2v2h-2zM18 8h2v2h-2z" fill="#252423"/>'
};
document.getElementById('visuals').innerHTML = Object.entries(icons).map(([name, art]) =>
  `<button class="flex items-center justify-center" aria-label="${name}"><svg class="size-6 overflow-visible" viewBox="0 0 24 24">${art}</svg></button>`).join('');
</script>
</body>
</html>
